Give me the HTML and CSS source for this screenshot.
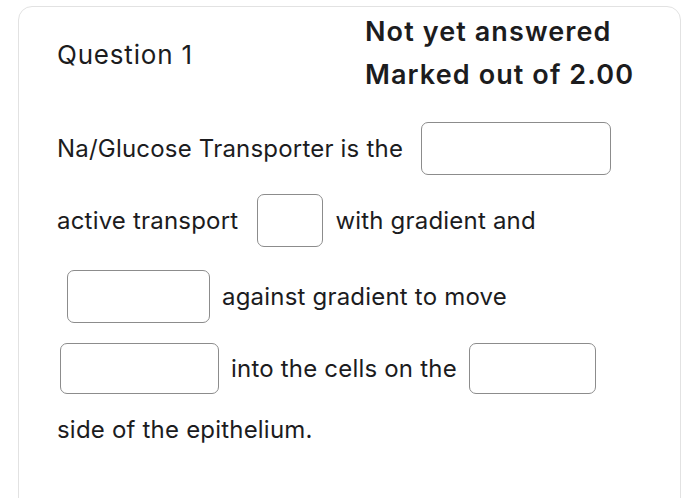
FILE: index.html
```html
<!DOCTYPE html>
<html lang="en">
<head>
  <meta charset="UTF-8">
  <meta name="viewport" content="width=device-width, initial-scale=1.0">
  <title>Question 1</title>
  <link rel="stylesheet" href="styles.css">
</head>
<body>

  <div class="que">
    <div class="que-head">
      <h3 class="que-no">Question 1</h3>
      <div class="que-info">
        <div>Not yet answered</div>
        <div>Marked out of 2.00</div>
      </div>
    </div>

    <!-- testo con spazi da completare -->
    <div class="que-text">
      <div class="line">
        <span>Na/Glucose Transporter is the</span>
        <input type="text" class="gap gap-a">
      </div>
      <div class="line line-2">
        <span>active transport</span>
        <input type="text" class="gap gap-b">
        <span>with gradient and</span>
      </div>
      <div class="line">
        <input type="text" class="gap gap-c">
        <span>against gradient to move</span>
      </div>
      <div class="line line-4">
        <input type="text" class="gap gap-d">
        <span>into the cells on the</span>
        <input type="text" class="gap gap-e">
      </div>
      <div class="line">
        <span>side of the epithelium.</span>
      </div>
    </div>
  </div>

</body>
</html>
```

FILE: styles.css
```css
body { margin: 0; background: #fff; font-family: Inter, "Noto Sans", sans-serif; color: #1c1c1e; }
.que {
  margin: 6px 19px 0 18px;
  border: 1.5px solid #e2e2e2;
  border-radius: 14px;
  min-height: 520px;
  padding: 3px 20px 0 38px;
}
.que-head {
  display: grid;
  grid-template-columns: 308px auto;
  align-items: center;
}
.que-no {
  margin: 0;
  margin-top: 3px;
  font-size: 26px;
  font-weight: 400;
  letter-spacing: 0.8px;
}
.que-info {
  font-size: 27px;
  font-weight: 600;
  line-height: 43px;
  letter-spacing: 1.1px;
}
/* righe del testo */
.que-text { margin-top: 26px; font-size: 24px; letter-spacing: 0.2px; }
.line {
  display: flex;
  align-items: center;
  min-height: 53px;
  margin-bottom: 19px;
}
.line-2 { margin-bottom: 23px; }
.line-4 { margin-bottom: 8px; }
.gap {
  height: 53px;
  box-sizing: border-box;
  border: 1.5px solid #8c8c8c;
  border-radius: 7px;
  background: #fff;
  padding: 0;
}
.gap-a { width: 190px; margin-left: 18px; }
.gap-b { width: 66px; margin: 0 12px 0 19px; }
.gap-c { width: 143px; margin: 0 12px 0 10px; }
.gap-d { width: 159px; height: 51px; margin: 0 12px 0 3px; }
.gap-e { width: 127px; height: 51px; margin-left: 12px; }
```
